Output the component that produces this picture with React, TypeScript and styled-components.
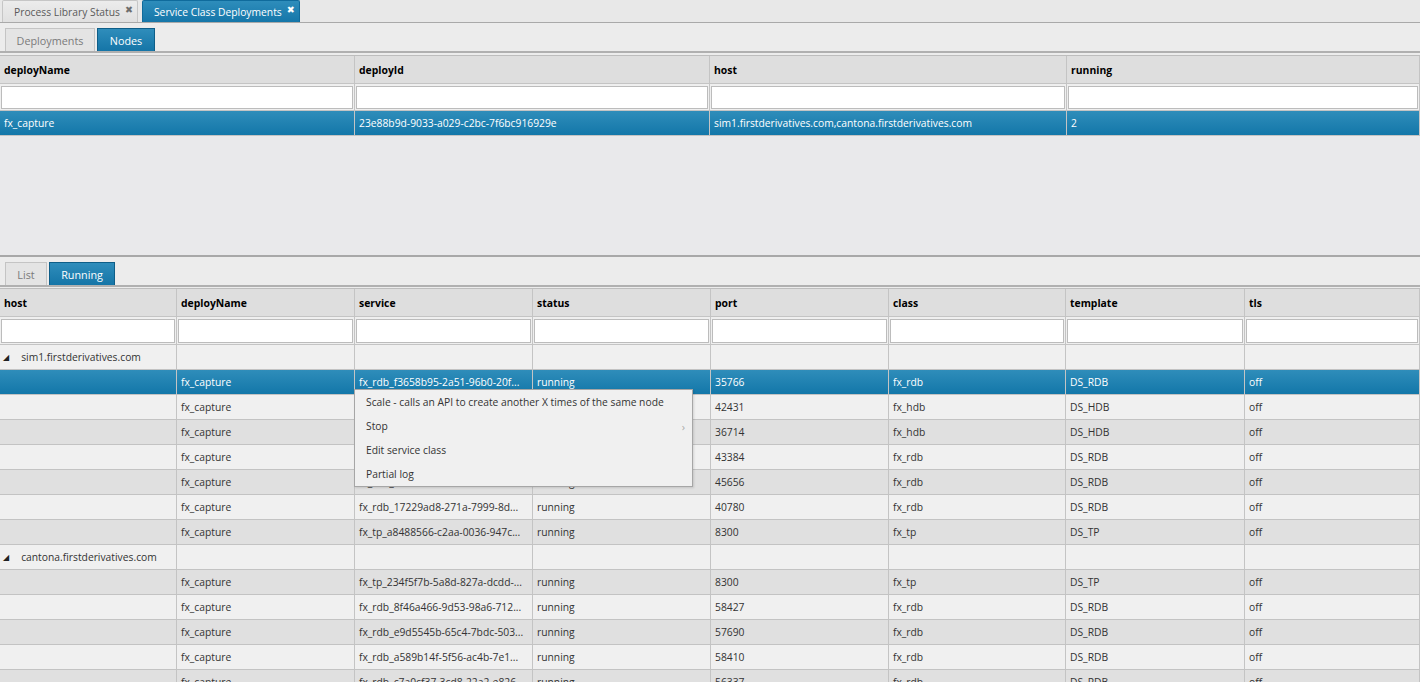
import React from "react";
import styled, { createGlobalStyle } from "styled-components";

const GlobalStyle = createGlobalStyle`
  html, body { margin: 0; padding: 0; }
  body {
    background: #e9e9ea;
    font-family: "Open Sans", "Noto Sans", "Liberation Sans", sans-serif;
    font-size: 10.3px;
    color: #333;
    overflow: hidden;
  }
  * { box-sizing: border-box; }
`;

const Page = styled.div`
  width: 1420px;
  height: 682px;
  display: flex;
  flex-direction: column;
  overflow: hidden;
  position: relative;
`;

const TabStrip = styled.div`
  height: 23px;
  display: flex;
  align-items: flex-end;
  gap: 4px;
  padding-left: 2px;
  border-bottom: 1px solid #a9a9a9;
  background: #e8e8e8;
`;

const Tab = styled.div<{ $active?: boolean }>`
  height: 22px;
  display: flex;
  align-items: center;
  gap: 5px;
  padding: 0 4px 0 11px;
  border: 1px solid ${(p) => (p.$active ? "#0f6b9c" : "#c6c6c6")};
  border-bottom: none;
  border-radius: 2px 2px 0 0;
  color: ${(p) => (p.$active ? "#fff" : "#5a5a5a")};
  background: ${(p) =>
    p.$active
      ? "linear-gradient(#2e8dbb, #1576a9)"
      : "linear-gradient(#ececec, #e0e0e0)"};
  font-size: 10.3px;
  white-space: nowrap;
`;

const Close = styled.span<{ $active?: boolean }>`
  font-family: "DejaVu Sans", sans-serif;
  font-size: 9.5px;
  color: ${(p) => (p.$active ? "#fff" : "#6e6e6e")};
  margin-top: -4px;
`;

const SubBar = styled.div`
  height: 30px;
  display: flex;
  align-items: flex-end;
  gap: 2px;
  padding-left: 5px;
  background: #ececec;
  border-bottom: 2px solid #b0b0b0;
`;

const SubTab = styled.div<{ $active?: boolean; $w: number }>`
  width: ${(p) => p.$w}px;
  height: 23px;
  display: flex;
  align-items: center;
  justify-content: center;
  border: 1px solid ${(p) => (p.$active ? "#0e5e88" : "#c4c4c4")};
  border-bottom: none;
  color: ${(p) => (p.$active ? "#fff" : "#7a7a7a")};
  background: ${(p) =>
    p.$active ? "linear-gradient(#2f8dbb, #1575a7)" : "#e4e4e4"};
  font-size: 10.8px;
`;

const Gap = styled.div<{ $h: number }>`
  height: ${(p) => p.$h}px;
  background: #ececec;
`;

const GridBox = styled.div<{ $h?: number }>`
  ${(p) => (p.$h ? `height: ${p.$h}px;` : "flex: 1;")}
  border-top: 1px solid #bdbdbd;
  background: #e9e9eb;
  overflow: hidden;
  position: relative;
`;

const Row = styled.div<{ $cols: string }>`
  display: grid;
  grid-template-columns: ${(p) => p.$cols};
  width: 1420px;
`;

const HeaderRow = styled(Row)`
  height: 28px;
  background: #dedede;
  border-bottom: 1px solid #c4c4c4;
`;

const HeaderCell = styled.div`
  display: flex;
  align-items: center;
  padding: 1px 0 0 4px;
  border-right: 1px solid #c4c4c4;
  font-weight: 700;
  color: #000;
  font-size: 10.4px;
`;

const FilterRow = styled(Row)<{ $h: number }>`
  height: ${(p) => p.$h}px;
  background: #efefef;
  border-bottom: 1px solid #c4c4c4;
`;

const FilterCell = styled.div`
  padding: 2px 1px 1px 1px;
  border-right: 1px solid #c4c4c4;
  display: flex;
`;

const FilterInput = styled.div`
  flex: 1;
  background: #fff;
  border: 1px solid #bcbcbc;
`;

const DataRow = styled(Row)<{ $kind: "light" | "dark" | "sel" | "group" }>`
  height: 25px;
  border-bottom: 1px solid #c3c3c3;
  color: ${(p) => (p.$kind === "sel" ? "#fff" : "#333")};
  background: ${(p) =>
    p.$kind === "sel"
      ? "linear-gradient(#2f8dba, #1377a9)"
      : p.$kind === "dark"
      ? "#e0e0e0"
      : "#f0f0f0"};
`;

const Cell = styled.div`
  display: flex;
  align-items: center;
  gap: 12px;
  padding-left: 4px;
  border-right: 1px solid #c4c4c4;
  white-space: nowrap;
  overflow: hidden;
`;

const Toggle = styled.span`
  font-family: "DejaVu Sans", sans-serif;
  font-size: 8px;
  color: #222;
  margin-left: -1px;
`;

const Splitter = styled.div`
  height: 2px;
  background: #a8a8a8;
`;

const Menu = styled.div`
  position: absolute;
  left: 354px;
  top: 389px;
  width: 339px;
  background: #f0f0f0;
  border: 1px solid #a6a6a6;
  box-shadow: 1px 1px 2px rgba(0, 0, 0, 0.12);
  z-index: 5;
`;

const MenuItem = styled.div`
  height: 24px;
  display: flex;
  align-items: center;
  justify-content: space-between;
  padding: 0 7px 0 11px;
  color: #333;
  font-size: 10.3px;
`;

const Chevron = styled.span`
  color: #aaa;
  font-size: 11px;
`;

const TOP_COLS = "355px 355px 357px 1fr";
const BOT_COLS = "177px 178px 178px 178px 178px 177px 179px 1fr";

type R = {
  kind: "light" | "dark" | "sel" | "group";
  cells: string[];
};

const rows: R[] = [
  { kind: "group", cells: ["sim1.firstderivatives.com", "", "", "", "", "", "", ""] },
  { kind: "sel", cells: ["", "fx_capture", "fx_rdb_f3658b95-2a51-96b0-20f...", "running", "35766", "fx_rdb", "DS_RDB", "off"] },
  { kind: "light", cells: ["", "fx_capture", "fx_hdb_0c51a2e4-7b1d-44c2-9a8...", "running", "42431", "fx_hdb", "DS_HDB", "off"] },
  { kind: "dark", cells: ["", "fx_capture", "fx_hdb_5e0f71c2-18ab-92d4-c3e...", "running", "36714", "fx_hdb", "DS_HDB", "off"] },
  { kind: "light", cells: ["", "fx_capture", "fx_rdb_9a7c3e10-44f2-b1d8-6c0...", "running", "43384", "fx_rdb", "DS_RDB", "off"] },
  { kind: "dark", cells: ["", "fx_capture", "fx_rdb_2b64d8f9-0e37-5ac1-7f2...", "running", "45656", "fx_rdb", "DS_RDB", "off"] },
  { kind: "light", cells: ["", "fx_capture", "fx_rdb_17229ad8-271a-7999-8d...", "running", "40780", "fx_rdb", "DS_RDB", "off"] },
  { kind: "dark", cells: ["", "fx_capture", "fx_tp_a8488566-c2aa-0036-947c...", "running", "8300", "fx_tp", "DS_TP", "off"] },
  { kind: "group", cells: ["cantona.firstderivatives.com", "", "", "", "", "", "", ""] },
  { kind: "dark", cells: ["", "fx_capture", "fx_tp_234f5f7b-5a8d-827a-dcdd-...", "running", "8300", "fx_tp", "DS_TP", "off"] },
  { kind: "light", cells: ["", "fx_capture", "fx_rdb_8f46a466-9d53-98a6-712...", "running", "58427", "fx_rdb", "DS_RDB", "off"] },
  { kind: "dark", cells: ["", "fx_capture", "fx_rdb_e9d5545b-65c4-7bdc-503...", "running", "57690", "fx_rdb", "DS_RDB", "off"] },
  { kind: "light", cells: ["", "fx_capture", "fx_rdb_a589b14f-5f56-ac4b-7e1...", "running", "58410", "fx_rdb", "DS_RDB", "off"] },
  { kind: "dark", cells: ["", "fx_capture", "fx_rdb_c7a0cf37-3cd8-22a2-e826...", "running", "56337", "fx_rdb", "DS_RDB", "off"] },
];

const topHeaders = ["deployName", "deployId", "host", "running"];
const botHeaders = ["host", "deployName", "service", "status", "port", "class", "template", "tls"];

export default function App() {
  return (
    <Page>
      <GlobalStyle />
      <TabStrip>
        <Tab>
          Process Library Status <Close>✖</Close>
        </Tab>
        <Tab $active>
          Service Class Deployments <Close $active>✖</Close>
        </Tab>
      </TabStrip>
      <SubBar>
        <SubTab $w={90}>Deployments</SubTab>
        <SubTab $w={58} $active>
          Nodes
        </SubTab>
      </SubBar>
      <Gap $h={2} />
      <GridBox $h={200}>
        <HeaderRow $cols={TOP_COLS}>
          {topHeaders.map((h) => (
            <HeaderCell key={h}>{h}</HeaderCell>
          ))}
        </HeaderRow>
        <FilterRow $cols={TOP_COLS} $h={27}>
          {topHeaders.map((h) => (
            <FilterCell key={h}>
              <FilterInput />
            </FilterCell>
          ))}
        </FilterRow>
        <DataRow $cols={TOP_COLS} $kind="sel">
          <Cell>fx_capture</Cell>
          <Cell>23e88b9d-9033-a029-c2bc-7f6bc916929e</Cell>
          <Cell>sim1.firstderivatives.com,cantona.firstderivatives.com</Cell>
          <Cell>2</Cell>
        </DataRow>
      </GridBox>
      <Splitter />
      <SubBar>
        <SubTab $w={42}>List</SubTab>
        <SubTab $w={66} $active>
          Running
        </SubTab>
      </SubBar>
      <Gap $h={1} />
      <GridBox>
        <HeaderRow $cols={BOT_COLS}>
          {botHeaders.map((h) => (
            <HeaderCell key={h}>{h}</HeaderCell>
          ))}
        </HeaderRow>
        <FilterRow $cols={BOT_COLS} $h={28}>
          {botHeaders.map((h) => (
            <FilterCell key={h}>
              <FilterInput />
            </FilterCell>
          ))}
        </FilterRow>
        {rows.map((r, i) => (
          <DataRow key={i} $cols={BOT_COLS} $kind={r.kind}>
            {r.cells.map((c, j) => (
              <Cell key={j}>
                {r.kind === "group" && j === 0 ? (
                  <>
                    <Toggle>◢</Toggle>
                    {c}
                  </>
                ) : (
                  c
                )}
              </Cell>
            ))}
          </DataRow>
        ))}
      </GridBox>
      <Menu>
        <MenuItem>Scale - calls an API to create another X times of the same node</MenuItem>
        <MenuItem>
          Stop <Chevron>›</Chevron>
        </MenuItem>
        <MenuItem>Edit service class</MenuItem>
        <MenuItem>Partial log</MenuItem>
      </Menu>
    </Page>
  );
}
